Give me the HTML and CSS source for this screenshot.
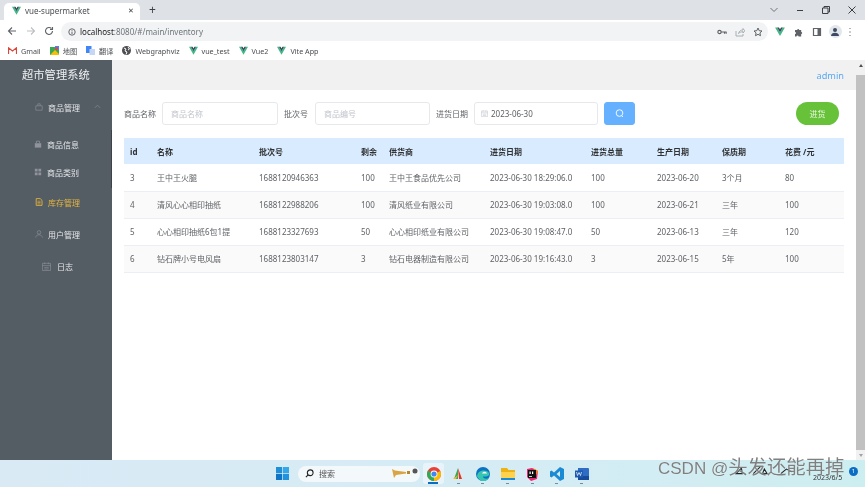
FILE: index.html
```html
<!DOCTYPE html>
<html lang="zh">
<head>
    <meta charset="UTF-8">
    <title>vue-supermarket</title>
    <link rel="stylesheet" href="styles.css">
</head>
<body>
    <svg class="defs" width="0" height="0">
        <symbol id="vue" viewBox="0 0 24 22">
            <path d="M0 1h5l7 12L19 1h5L12 22z" fill="#41b883"/>
            <path d="M5 1h4.500l2.500 4.500L14.500 1H19l-7 12z" fill="#35495e"/>
        </symbol>
    </svg>

    <div class="tabbar">
        <div class="tab">
            <svg class="tab-icon"><use href="#vue"/></svg>
            <span class="tab-title">vue-supermarket</span>
            <span class="tab-close">✕</span>
        </div>
        <span class="tab-new">+</span>
        <div class="win-btns">
            <svg width="10" height="10" viewBox="0 0 10 10"><path d="M1.500 3l3.500 3.500L8.500 3" fill="none" stroke="#70757a"/></svg>
            <svg width="10" height="10" viewBox="0 0 10 10"><path d="M2 5.500h6" stroke="#3c4043"/></svg>
            <svg width="10" height="10" viewBox="0 0 10 10"><path d="M1.500 3h5.500v5.500H1.500zM3 3V1.500h5.500V7H7" fill="none" stroke="#3c4043"/></svg>
            <svg width="10" height="10" viewBox="0 0 10 10"><path d="M1.500 1.500l7 7M8.500 1.500l-7 7" stroke="#3c4043"/></svg>
        </div>
    </div>

    <div class="toolbar">
        <div class="nav-btns">
            <svg width="10" height="10" viewBox="0 0 10 10"><path d="M9 5H1.500M5 1.500L1.500 5 5 8.500" fill="none" stroke="#5f6368" stroke-width="1.100"/></svg>
            <svg width="10" height="10" viewBox="0 0 10 10"><path d="M1 5h7.500M5 1.500L8.500 5 5 8.500" fill="none" stroke="#bcbfc3" stroke-width="1.100"/></svg>
            <svg width="10" height="10" viewBox="0 0 10 10"><path d="M8.500 5A3.500 3.500 0 1 1 7.500 2.500M8.500 1v2.500H6" fill="none" stroke="#5f6368" stroke-width="1.100"/></svg>
        </div>
        <div class="urlbar">
            <svg width="8" height="8" viewBox="0 0 10 10"><circle cx="5" cy="5" r="4" fill="none" stroke="#5f6368" stroke-width="1.200"/><path d="M5 4.500v3M5 2.500v1" stroke="#5f6368" stroke-width="1.200"/></svg>
            <span class="url"><b>localhost</b>:8080/#/main/inventory</span>
            <div class="url-icons">
                <svg width="10" height="8" viewBox="0 0 12 8"><circle cx="3" cy="4" r="2" fill="none" stroke="#5f6368" stroke-width="1.400"/><path d="M5 4h6.500M9 4v2M11 4v2" stroke="#5f6368" stroke-width="1.400"/></svg>
                <svg width="10" height="10" viewBox="0 0 10 10"><path d="M1 4v5h7V7M3.500 6.500C4 4 6 3 8 3V1.500L9.800 3.800 8 6V4.700C6 4.700 5 5.300 3.500 6.500z" fill="none" stroke="#9aa0a6" stroke-width=".8"/></svg>
                <svg width="10" height="10" viewBox="0 0 10 10"><path d="M5 1l1.200 2.700 2.800.3-2.100 1.900.6 2.800L5 7.300 2.500 8.700l.6-2.800L1 4l2.800-.3z" fill="none" stroke="#5f6368"/></svg>
            </div>
        </div>
        <div class="ext-icons">
            <svg class="ext-vue"><use href="#vue"/></svg>
            <svg width="10" height="10" viewBox="0 0 10 10"><path d="M1 3h2.200a1 1 0 0 1 2 0h2v2a1 1 0 0 1 0 2v2.500H4.500a1 1 0 0 0-2 0H1V7a1 1 0 0 0 0-2z" fill="#5f6368"/></svg>
            <svg width="10" height="10" viewBox="0 0 10 10"><path d="M1.500 1.500h7v7h-7z" fill="none" stroke="#5f6368" stroke-width="1.200"/><path d="M5.500 1.500h3v7h-3z" fill="#5f6368"/></svg>
            <span class="avatar">
                <svg width="10" height="10" viewBox="0 0 10 10"><circle cx="5" cy="3" r="2" fill="#3c4a63"/><path d="M1 9c0-2.500 2-3.300 4-3.300S9 6.500 9 9z" fill="#3c4a63"/></svg>
            </span>
            <svg width="4" height="10" viewBox="0 0 4 10"><path d="M2 1v.8M2 4.600v.8M2 8.200V9" stroke="#5f6368" stroke-width="1.300"/></svg>
        </div>
    </div>

    <div class="bookmarks">
        <a class="bm">
            <svg width="9" height="7" viewBox="0 0 9 7"><path d="M.5 7V.8L4.500 4 8.500.8V7" fill="none" stroke="#d9483b" stroke-width="1.200"/></svg>
            Gmail
        </a>
        <a class="bm">
            <svg width="9" height="9" viewBox="0 0 9 9"><path d="M0 1h9v8H0z" fill="#34a853"/><path d="M0 9l5-5 4 4v1z" fill="#fbbc04"/><path d="M5 0h4v4H5z" fill="#4285f4"/><circle cx="6.500" cy="2.500" r="1.500" fill="#ea4335"/></svg>
            地图
        </a>
        <a class="bm">
            <svg width="9" height="9" viewBox="0 0 9 9"><path d="M0 0h5.500v7H0z" fill="#4285f4"/><path d="M3.500 3H9v6H3.500z" fill="#c6d7f5"/></svg>
            翻译
        </a>
        <a class="bm">
            <svg width="9" height="9" viewBox="0 0 9 9"><circle cx="4.500" cy="4.500" r="4.500" fill="#4d4f53"/><path d="M2 2l2 1-1 2 2 1-1 2.500M6 1l1.500 2-1.500 1" fill="none" stroke="#fff"/></svg>
            Webgraphviz
        </a>
        <a class="bm"><svg class="bm-vue"><use href="#vue"/></svg>vue_test</a>
        <a class="bm"><svg class="bm-vue"><use href="#vue"/></svg>Vue2</a>
        <a class="bm"><svg class="bm-vue"><use href="#vue"/></svg>Vite App</a>
    </div>

    <div class="app">
        <aside class="sidebar">
            <div class="logo">超市管理系统</div>
            <ul class="menu">
                <li class="menu-item menu-open">
                    <svg class="mi" viewBox="0 0 10 10"><path d="M1 3.500h8V9H1zM3.500 3.500V1h3v2.500" fill="none" stroke="#909399" stroke-width=".8"/></svg>
                    商品管理
                    <svg class="arrow" width="7" height="7" viewBox="0 0 8 8"><path d="M1 5.500L4 2.500l3 3" fill="none" stroke="#7d858d"/></svg>
                </li>
                <li class="menu-item sub">
                    <svg class="mi" viewBox="0 0 10 10"><path d="M1 4h8v5.500H1z" fill="#909399"/><path d="M3 4V1.500h4V4" fill="none" stroke="#909399"/></svg>
                    商品信息
                </li>
                <li class="menu-item sub">
                    <svg class="mi" viewBox="0 0 10 10"><path d="M1 1h3.500v3.500H1zM5.500 1H9v3.500H5.500zM1 5.500h3.500V9H1zM5.500 5.500H9V9H5.500z" fill="#909399"/></svg>
                    商品类别
                </li>
                <li class="menu-item active">
                    <svg class="mi" viewBox="0 0 10 10"><path d="M1.500.8h5L8.800 3v6.200h-7.300z" fill="none" stroke="#e6b63f" stroke-width="1.100"/><path d="M3 4h4M3 5.700h4M3 7.400h4" stroke="#e6b63f" stroke-width=".8"/></svg>
                    库存管理
                </li>
                <li class="menu-item">
                    <svg class="mi" viewBox="0 0 10 10"><circle cx="5" cy="3" r="2.200" fill="none" stroke="#909399" stroke-width=".8"/><path d="M1 9.500C1 7 3 6 5 6s4 1 4 3.500" fill="none" stroke="#909399" stroke-width=".8"/></svg>
                    用户管理
                </li>
                <li class="menu-item menu-log">
                    <svg class="mi" viewBox="0 0 10 10"><path d="M.5 1.500h9v8h-9zM.5 4h9M3 .5v2M7 .5v2M2.500 6h5M2.500 7.800h5" fill="none" stroke="#909399" stroke-width=".7"/></svg>
                    日志
                </li>
            </ul>
            <span class="side-thumb"></span>
        </aside>

        <main class="content">
            <div class="topbar"><a class="admin">admin</a></div>

            <div class="filters">
                <label>商品名称</label>
                <div class="field field-name"><span class="ph">商品名称</span></div>
                <label>批次号</label>
                <div class="field field-batch"><span class="ph">商品编号</span></div>
                <label>进货日期</label>
                <div class="field field-date">
                    <svg width="7" height="7" viewBox="0 0 10 10"><path d="M.5 1.500h9v8h-9zM.5 4h9M3 .5v2M7 .5v2M2.500 6h5M2.500 7.800h5" fill="none" stroke="#c0c4cc" stroke-width=".8"/></svg>
                    2023-06-30
                </div>
                <button class="btn-search">
                    <svg width="9" height="9" viewBox="0 0 10 10"><circle cx="5" cy="4.500" r="3.700" fill="none" stroke="#fff"/><path d="M7.500 7.500l1.300 1.300" stroke="#fff"/></svg>
                </button>
                <button class="btn-add">进货</button>
            </div>

            <table class="goods">
                <colgroup>
                    <col class="c1"><col class="c2"><col class="c3"><col class="c4"><col class="c5">
                    <col class="c6"><col class="c7"><col class="c8"><col class="c9"><col class="c10">
                </colgroup>
                <thead>
                    <tr><th>id</th><th>名称</th><th>批次号</th><th>剩余</th><th>供货商</th><th>进货日期</th><th>进货总量</th><th>生产日期</th><th>保质期</th><th>花费 /元</th></tr>
                </thead>
                <tbody>
                    <tr><td>3</td><td>王中王火腿</td><td>1688120946363</td><td>100</td><td>王中王食品优先公司</td><td>2023-06-30 18:29:06.0</td><td>100</td><td>2023-06-20</td><td>3个月</td><td>80</td></tr>
                    <tr><td>4</td><td>清风心心相印抽纸</td><td>1688122988206</td><td>100</td><td>清风纸业有限公司</td><td>2023-06-30 19:03:08.0</td><td>100</td><td>2023-06-21</td><td>三年</td><td>100</td></tr>
                    <tr><td>5</td><td>心心相印抽纸6包1提</td><td>1688123327693</td><td>50</td><td>心心相印纸业有限公司</td><td>2023-06-30 19:08:47.0</td><td>50</td><td>2023-06-13</td><td>三年</td><td>120</td></tr>
                    <tr><td>6</td><td>钻石牌小号电风扇</td><td>1688123803147</td><td>3</td><td>钻石电器制造有限公司</td><td>2023-06-30 19:16:43.0</td><td>3</td><td>2023-06-15</td><td>5年</td><td>100</td></tr>
                </tbody>
            </table>
        </main>

        <div class="scrollbar">
            <span class="sb-up"></span>
            <span class="sb-thumb"></span>
            <span class="sb-down"></span>
        </div>
    </div>

    <div class="taskbar">
        <svg class="win-logo" width="13" height="13" viewBox="0 0 14 14"><path d="M0 0h6.600v6.600H0z" fill="#1f8fd8"/><path d="M7.400 0H14v6.600H7.400z" fill="#35a7e8"/><path d="M0 7.400h6.600V14H0z" fill="#0f76c7"/><path d="M7.400 7.400H14V14H7.400z" fill="#2193de"/></svg>
        <div class="search">
            <svg width="9" height="9" viewBox="0 0 10 10"><circle cx="5.800" cy="4.200" r="3.200" fill="none" stroke="#222" stroke-width="1.200"/><path d="M3.500 6.500L1 9" stroke="#222" stroke-width="1.200"/></svg>
            <span>搜索</span>
            <svg class="search-art" width="27" height="13" viewBox="0 0 27 13"><path d="M1 2l3 1.500 11 1.500 0 1.500L5 8 3 11z" fill="#d9a441"/><path d="M16 4h3v3h-3z" fill="#b98527"/><circle cx="24" cy="4" r="2.500" fill="#555"/></svg>
        </div>
        <div class="apps">
            <span class="app-btn app-on">
                <svg width="14" height="14" viewBox="0 0 14 14"><circle cx="7" cy="7" r="7" fill="#e94235"/><path d="M7 7L1 3.500A7 7 0 0 0 7 14z" fill="#34a853"/><path d="M7 7l6.300-3A7 7 0 0 1 7 14z" fill="#fbbc04"/><circle cx="7" cy="7" r="3.400" fill="#fff"/><circle cx="7" cy="7" r="2.600" fill="#4285f4"/></svg>
            </span>
            <span class="app-btn">
                <svg width="14" height="14" viewBox="0 0 14 14"><path d="M7 1L1 12h12z" fill="#e8e4e0"/><path d="M7 1L3 12h4z" fill="#3aa655"/><path d="M7 1l4 11H8z" fill="#d8382e"/><path d="M2 12h3L7 8z" fill="#f1b82d"/></svg>
            </span>
            <span class="app-btn">
                <svg width="14" height="14" viewBox="0 0 14 14"><circle cx="7" cy="7" r="7" fill="#0c72c4"/><path d="M1 9C2 3 10 2 13 6c1 2-1 3.500-3 3.500H7c0 2 3 3 6 1.500-2 4-8 4-10 1-1-1-2-2-2-3z" fill="#35c5b0"/><path d="M6 6.500h5C10 4 7 4 6 6.500z" fill="#fff"/></svg>
            </span>
            <span class="app-btn">
                <svg width="14" height="14" viewBox="0 0 14 14"><path d="M0 1h6l1.500 2H14v3H0z" fill="#eeb212"/><path d="M0 5h14v8H0z" fill="#ffd24d"/><path d="M0 11h14v2H0z" fill="#1b8bd6"/></svg>
            </span>
            <span class="app-btn">
                <svg width="14" height="14" viewBox="0 0 14 14"><path d="M2 2l5-1 6 3-1 8-6 2-4-4z" fill="#e5276f"/><path d="M8 1l5 3-1 4z" fill="#fc801d"/><path d="M3 3h8v8H3z" fill="#111"/><path d="M4 9h3v.8H4z" fill="#fff"/><path d="M4.500 4.500h1.200V7H4.500zM7 4.500h1.200V7H7z" fill="#fff"/></svg>
            </span>
            <span class="app-btn">
                <svg width="14" height="14" viewBox="0 0 14 14"><path d="M10 0l4 2v10l-4 2-6-5.500L1.500 10.500 0 9.500V4.500l1.500-1L4 5.500zM10 4L6.500 7 10 10z" fill="#1a8ad4"/></svg>
            </span>
            <span class="app-btn">
                <svg width="14" height="14" viewBox="0 0 14 14"><path d="M3 1h10a1 1 0 0 1 1 1v10a1 1 0 0 1-1 1H3z" fill="#2f6dc4"/><path d="M3 9h11v4H3z" fill="#164a9a"/><path d="M0 3.500h8v7H0z" fill="#1c5bb0"/><path d="M1.500 5l1 3.500L4 5.500l1.500 3L6.500 5" fill="none" stroke="#fff" stroke-width=".7"/></svg>
            </span>
        </div>
        <div class="tray">
            <span class="tray-marks">
                <svg width="66" height="10" viewBox="0 0 72 10"><path d="M1 9l6-6 1 6zM20 9l8-8M30 9l2-5 3 5zM50 9l6-5 6 3" fill="none" stroke="#222" stroke-width="1.200"/></svg>
            </span>
            <span class="tray-date">2023/6/5</span>
            <span class="tray-badge">1</span>
        </div>
        <span class="watermark">CSDN @<span class="wm-name">头发还能再掉</span></span>
    </div>
</body>
</html>
```

FILE: styles.css
```css
html, body {
    margin: 0;
    height: 100%;
}
body {
    width: 865px;
    height: 487px;
    overflow: hidden;
    display: flex;
    flex-direction: column;
    font-family: "Noto Sans", "Noto Sans CJK SC", sans-serif;
    font-size: 8px;
    color: #606266;
    filter: blur(0.45px);
}
.defs {
    position: absolute;
}

/* browser frame */
.tabbar {
    height: 20px;
    background: #dee1e6;
    display: flex;
    align-items: flex-end;
    flex-shrink: 0;
}
.tab {
    width: 136px;
    height: 17px;
    margin-left: 4px;
    padding: 0 6px 2px 8px;
    box-sizing: border-box;
    background: #fff;
    border-radius: 5px 5px 0 0;
    display: flex;
    align-items: center;
}
.tab-icon {
    width: 9px;
    height: 9px;
    margin-right: 4px;
}
.tab-title {
    flex: 1;
    font-size: 8px;
    color: #4a4d51;
}
.tab-close {
    font-size: 7px;
    color: #3c4043;
}
.tab-new {
    margin: 0 0 3px 9px;
    font-size: 12px;
    line-height: 14px;
    color: #3c4043;
}
.win-btns {
    margin-left: auto;
    height: 20px;
    padding-right: 8px;
    display: flex;
    align-items: center;
    gap: 16px;
}
.toolbar {
    height: 21px;
    background: #fff;
    display: flex;
    align-items: center;
    flex-shrink: 0;
}
.nav-btns {
    width: 61px;
    padding-left: 7px;
    box-sizing: border-box;
    display: flex;
    gap: 8.500px;
}
.urlbar {
    width: 707px;
    height: 19px;
    margin-top: 2px;
    padding: 0 5px 0 7px;
    box-sizing: border-box;
    background: #f1f3f4;
    border-radius: 10px;
    display: flex;
    align-items: center;
    gap: 4px;
}
.url {
    font-size: 8px;
    color: #70757a;
}
.url b {
    font-weight: 400;
    color: #202124;
}
.url-icons {
    margin-left: auto;
    display: flex;
    align-items: center;
    gap: 8px;
}
.ext-icons {
    flex: 1;
    padding: 2px 0 0 7px;
    display: flex;
    align-items: center;
    gap: 8.500px;
}
.ext-vue {
    width: 10px;
    height: 9px;
}
.avatar {
    width: 13px;
    height: 13px;
    margin: 0 -2px;
    border-radius: 50%;
    background: #e3e6ea;
    display: flex;
    align-items: center;
    justify-content: center;
}
.bookmarks {
    height: 19px;
    padding-left: 8px;
    background: #fff;
    display: flex;
    align-items: center;
    gap: 9px;
    flex-shrink: 0;
    font-size: 7.200px;
    color: #4a4d51;
}
.bm {
    display: flex;
    align-items: center;
    gap: 4px;
}
.bm-vue {
    width: 9px;
    height: 9px;
}

/* page */
.app {
    flex: 1;
    min-height: 0;
    display: flex;
    background: #fff;
}
.sidebar {
    width: 112px;
    flex-shrink: 0;
    position: relative;
    background: #545c64;
    color: #fff;
}
.side-thumb {
    position: absolute;
    top: 70px;
    right: 0;
    width: 1px;
    height: 58px;
    background: #3c4248;
}
.logo {
    height: 30px;
    padding-left: 22px;
    line-height: 30px;
    font-size: 11.300px;
    color: #eef0f2;
}
.menu {
    margin: 0;
    padding: 0;
    list-style: none;
}
.menu-item {
    height: 32px;
    padding-left: 35px;
    display: flex;
    align-items: center;
    gap: 5px;
    color: #e4e6e8;
    position: relative;
}
.mi {
    width: 8px;
    height: 8px;
}
.menu-open {
    height: 34px;
    margin-bottom: 6px;
}
.arrow {
    position: absolute;
    left: 94px;
    top: 13px;
}
.sub {
    height: 28px;
    padding-left: 34px;
}
.active {
    color: #e6b63f;
}
.menu-log {
    padding-left: 42px;
    gap: 6px;
}
.menu-log .mi {
    width: 9px;
    height: 9px;
}
.content {
    flex: 1;
    min-width: 0;
}
.topbar {
    height: 30px;
    padding: 0 12px 0 0;
    margin-bottom: 12px;
    background: #f1f1f1;
    display: flex;
    justify-content: flex-end;
    align-items: center;
    font-size: 9.200px;
}
.admin {
    color: #5ba8f5;
}
.filters {
    height: 23px;
    margin: 0 17px 13px 12px;
    display: flex;
    align-items: center;
}
.filters label {
    margin-right: 6px;
}
.field {
    height: 23px;
    margin-right: 6px;
    padding-left: 8px;
    box-sizing: border-box;
    border: 1px solid #e6e8ec;
    border-radius: 3px;
    display: flex;
    align-items: center;
    gap: 3px;
}
.field-name {
    width: 116px;
}
.field-batch {
    width: 115px;
    margin-left: 1px;
}
.field-date {
    width: 124px;
    padding-left: 6px;
}
.ph {
    color: #c0c4cc;
}
.btn-search {
    width: 31px;
    height: 23px;
    padding: 0;
    background: #66b1ff;
    border: 1px solid #66b1ff;
    border-radius: 3px;
}
.btn-add {
    width: 43px;
    height: 23px;
    margin-left: auto;
    padding: 0;
    background: #67c23a;
    border: 0;
    border-radius: 12px;
    color: #e8f6e0;
    font: inherit;
}
.goods {
    width: 720px;
    margin-left: 12px;
    table-layout: fixed;
    border-collapse: collapse;
}
.c1 { width: 27px; }
.c2 { width: 102px; }
.c3 { width: 102px; }
.c4 { width: 28px; }
.c5 { width: 101px; }
.c6 { width: 101px; }
.c7 { width: 66px; }
.c8 { width: 65px; }
.c9 { width: 63px; }
.c10 { width: 65px; }
.goods th, .goods td {
    height: 27px;
    padding: 0 0 0 6px;
    box-sizing: border-box;
    text-align: left;
    white-space: nowrap;
    overflow: hidden;
}
.goods th {
    height: 26px;
    background: #d9ecff;
    color: #303133;
    font-weight: 700;
}
.goods td {
    border-bottom: 1px solid #ebeef5;
}
.goods tbody tr:nth-child(even) td {
    background: #fafafa;
}

/* page scrollbar */
.scrollbar {
    width: 9px;
    flex-shrink: 0;
    background: #f1f1f1;
    display: flex;
    flex-direction: column;
    align-items: center;
}
.sb-up, .sb-down {
    position: relative;
}
.sb-up {
    height: 15px;
}
.sb-down {
    height: 10px;
}
.sb-up::after, .sb-down::after {
    content: "";
    position: absolute;
    left: -2px;
    top: 4px;
    border: 2px solid transparent;
}
.sb-up::after {
    border-top-width: 0;
    border-bottom: 3px solid #505050;
}
.sb-down::after {
    border-bottom-width: 0;
    border-top: 3px solid #a3a3a3;
}
.sb-thumb {
    width: 100%;
    flex: 1;
    background: #c1c1c1;
}

/* windows taskbar */
.taskbar {
    height: 27px;
    flex-shrink: 0;
    position: relative;
    background: linear-gradient(90deg, #d9eaf5, #d5ecf5 60%, #cdeef0);
    display: flex;
    align-items: center;
    padding-left: 276px;
}
.win-logo {
    margin-right: 9px;
}
.search {
    width: 122px;
    height: 16px;
    padding: 0 2px 0 7px;
    box-sizing: border-box;
    border-radius: 8px;
    background: #f3f8fb;
    display: flex;
    align-items: center;
    gap: 5px;
    color: #555;
}
.search-art {
    margin-left: auto;
}
.apps {
    margin-left: 3px;
    display: flex;
    gap: 3.700px;
}
.app-btn {
    width: 21px;
    height: 21px;
    position: relative;
    display: flex;
    align-items: center;
    justify-content: center;
    border-radius: 3px;
}
.app-btn::after {
    content: "";
    position: absolute;
    bottom: 0;
    left: 9px;
    width: 3px;
    height: 1px;
    background: #7b8a94;
}
.app-on {
    background: #e9f4fa;
}
.app-on::after {
    left: 5px;
    width: 10px;
    height: 2px;
    background: #0a6cc4;
}
.tray {
    position: absolute;
    top: 0;
    right: 0;
    width: 130px;
    height: 27px;
}
.tray-marks {
    position: absolute;
    top: 5px;
    left: 0;
}
.tray-date {
    position: absolute;
    top: 13px;
    left: 78px;
    font-size: 7px;
    color: #333;
}
.tray-badge {
    position: absolute;
    top: 7px;
    left: 114px;
    width: 9px;
    height: 9px;
    border-radius: 50%;
    background: #0a6cc4;
    color: #fff;
    font-size: 6px;
    line-height: 9px;
    text-align: center;
}
.watermark {
    position: absolute;
    top: -3px;
    left: 658px;
    font-family: "Liberation Sans", "Noto Sans CJK SC", sans-serif;
    font-size: 17px;
    line-height: 20px;
    color: rgba(85, 85, 85, 0.75);
    text-shadow: 0 0 1px #fff;
    white-space: nowrap;
}
.wm-name {
    font-size: 19.400px;
}
```
